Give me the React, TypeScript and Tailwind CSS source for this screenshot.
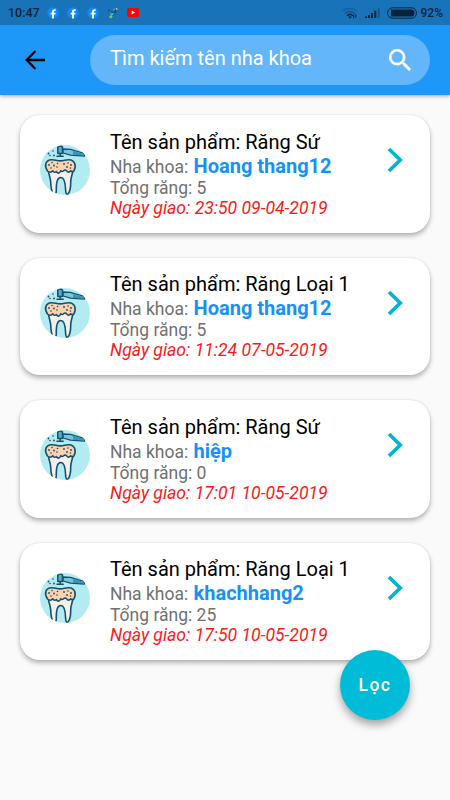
interface Order {
  id: number;
  product: string;
  clinic: string;
  total: number;
  deliveryDate: string;
}

const orders: Order[] = [
  { id: 1, product: "Răng Sứ", clinic: "Hoang thang12", total: 5, deliveryDate: "23:50 09-04-2019" },
  { id: 2, product: "Răng Loại 1", clinic: "Hoang thang12", total: 5, deliveryDate: "11:24 07-05-2019" },
  { id: 3, product: "Răng Sứ", clinic: "hiệp", total: 0, deliveryDate: "17:01 10-05-2019" },
  { id: 4, product: "Răng Loại 1", clinic: "khachhang2", total: 25, deliveryDate: "17:50 10-05-2019" },
];

function FacebookIcon() {
  return (
    <svg viewBox="0 0 12 12" className="h-3 w-3">
      <circle cx="6" cy="6" r="5.8" fill="#1088fa" />
      <path d="M5 11.6V7.6H3.6V5.8H5V4.7c0-1.6.9-2.5 2.4-2.5l1.3.1v1.6h-.8c-.7 0-.9.4-.9.9v1h1.6l-.3 1.8H7v4z" fill="#fff" />
    </svg>
  );
}

function BirdIcon() {
  return (
    <svg viewBox="0 0 12 12" className="h-3 w-3">
      <path d="M.8 1.6l3 3.2 3.2-.2 1.4-2.8 1.5.4-.7 3.1-2.5 3.1-2.5.6L2 6.2z" fill="#174f7c" />
      <path d="M1.8 4.2l2.7 2 3.1-.4L6 8.2l-2 .3zM6.1 2.3l1.2-1 .6 1.8-1.1.8z" fill="#38b3dc" />
      <path d="M8.6 1.3c1-.8 2.2.2 1.9 1.2l-1 .7z" fill="#f6c56b" />
      <path d="M2.2 9l2.6-.9.8 1.5-1.5 1.8-1.5-.6z" fill="#8cc63e" />
    </svg>
  );
}

function StatusBar() {
  return (
    <div className="flex h-[25px] items-center bg-[#1873b9] pl-2 pr-[7px] text-[#0c2337]">
      <span className="w-[39px] pt-px text-[12.5px] font-medium leading-none">10:47</span>
      <div className="flex items-center gap-2">
        <FacebookIcon />
        <FacebookIcon />
        <FacebookIcon />
        <BirdIcon />
        <svg viewBox="0 0 12 9" className="h-[9px] w-3">
          <rect width="12" height="9" rx="2" fill="#f00" />
          <path d="M4.7 2.5v4l3.5-2z" fill="#fff" />
        </svg>
      </div>
      <div className="ml-auto flex items-center">
        <svg viewBox="0 0 16 12" className="mr-[7px] h-3 w-4" fill="none" stroke="#0c2337">
          <path d="M.8 4.2C4.6.4 11.4.4 15.2 4.2" strokeWidth="1.2" opacity=".25" />
          <path d="M3 6.7C5.7 4 10.3 4 13 6.7" strokeWidth="1.2" opacity=".4" />
          <path d="M5 8.8c1.7-1.6 4.3-1.6 6 0" strokeWidth="1.5" />
          <path d="M6.2 9.6h3.6L8 11.7z" fill="#0c2337" stroke="none" />
          <path d="M11.7 7.6v3.8M13.8 7v3.6" strokeWidth="1" />
        </svg>
        <svg viewBox="0 0 15 10" className="mr-[7px] h-[10px] w-[15px]" fill="#0c2337">
          <path d="M0 8.5h2V10H0zM3 7h2v3H3zM6 5h2v5H6zM9.3 2.8h2V10h-2z" />
          <path d="M12.8.3h2V10h-2z" opacity=".35" />
        </svg>
        <svg viewBox="0 0 30 12" className="mr-1 h-3 w-[30px]">
          <rect x=".5" y=".8" width="29" height="10.4" rx="5.2" fill="none" stroke="#0c2337" />
          <path d="M4 2.5h20a3.5 3.5 0 0 1 0 7H4z" fill="#0c2337" />
        </svg>
        <span className="text-xs font-medium leading-none">92%</span>
      </div>
    </div>
  );
}

function ToothAvatar() {
  return (
    <svg viewBox="0 0 50 50" className="mt-[30px] h-[50px] w-[50px] shrink-0 overflow-hidden rounded-full">
      <rect width="50" height="50" fill="#b2ebf2" />
      <g stroke="#15516a" strokeWidth="1.6" strokeLinejoin="round" strokeLinecap="round">
        <path d="M8.3 25c.3 5 2.2 7 2.4 12 .1 5 .6 9.5 2.8 12 2.2 1 2.9-1 2.8-4-.2-7 .9-12.5 4.5-12.5s4.6 5 4.8 12.5c.1 3 .8 5 2.3 4 2.2-2.5 2.9-7 2.8-12 0-5 1.8-7 2.3-12z" fill="#f4efeb" />
        <path d="M7.5 26C4 21 5.3 15 11.5 14.7c3.5-.2 5 1.2 8.8 1.2s5.2-1.4 8.7-1.2c6 .3 7.6 6 4.9 11.3-1.3.8-2.3.7-3.2-.1-1.4 1.5-2.8 1.7-4 0-1-1.2-2-1.2-3.1-.1-1.1 1.1-2 .9-2.8-.1-1.3 3-3.4 3.2-4.4.8-1.3 1.3-2.9 1-3.6-.7-1.4 1.7-3.3 1.9-5.3.2z" fill="#fbd1ae" />
        <path d="M23 4l7.5.3 14 4.2v2.5l-14-.8L23 8z" fill="#78c3df" strokeWidth="1.3" />
        <path d="M17.8 2c1-1.3 3.7-1.3 4.7 0v6.5h-4.7zM20.2 8.7v2.6M17 11.3h6.2" fill="#58abcc" strokeWidth="1.5" />
      </g>
      <path d="M33 6l11 3v1.7l-11-.9z" fill="#3c94b5" />
      <g fill="#15516a">
        <circle cx="9" cy="20" r=".9" />
        <circle cx="12" cy="17.5" r=".8" />
        <circle cx="14" cy="20.5" r=".9" />
        <circle cx="11" cy="23" r=".8" />
        <circle cx="17.5" cy="18.5" r=".8" />
        <circle cx="17" cy="22" r=".8" />
        <circle cx="24" cy="19" r=".9" />
        <circle cx="27" cy="22" r=".9" />
        <circle cx="28" cy="18" r=".8" />
        <circle cx="31" cy="20" r=".9" />
        <circle cx="30.5" cy="23" r=".8" />
        <circle cx="8.5" cy="8.5" r=".9" />
        <circle cx="13" cy="6" r=".8" />
        <circle cx="10" cy="10.5" r=".8" />
        <circle cx="14" cy="10.5" r=".9" />
      </g>
    </svg>
  );
}

function OrderCard({ order }: { order: Order }) {
  return (
    <article className="flex h-[117.5px] rounded-[20px] bg-white px-5 shadow-[0_3px_5px_rgba(0,0,0,0.28),0_0_2px_rgba(0,0,0,0.12)]">
      <ToothAvatar />
      <div className="ml-5 flex-1 whitespace-nowrap pt-[14.5px]">
        <h2 className="text-[20px] leading-6 text-black">Tên sản phẩm: {order.product}</h2>
        <p className="text-[17.5px] leading-6 text-[#707070]">
          Nha khoa: <span className="ml-px text-[20px] font-bold text-[#1592f7]">{order.clinic}</span>
        </p>
        <p className="-mt-px text-[17.5px] leading-5 text-[#707070]">Tổng răng: {order.total}</p>
        <p className="text-[17.6px] italic leading-5 text-[#f81a1a]">Ngày giao: {order.deliveryDate}</p>
      </div>
      <svg viewBox="0 0 16 26" className="mr-[7px] mt-8 h-[26px] w-4 shrink-0">
        <path d="M2 2l11.2 11L2 24" fill="none" stroke="#00b5d3" strokeWidth="3.7" />
      </svg>
    </article>
  );
}

export default function App() {
  return (
    <div className="relative h-[800px] w-[450px] overflow-hidden bg-[#fafafa] font-[Roboto,sans-serif]">
      <header className="bg-[#1e98f8] shadow-[0_1px_4px_rgba(0,0,0,0.35)]">
        <StatusBar />
        <div className="flex h-[70px] items-center pl-[25px] pr-5">
          <svg viewBox="0 0 20 20" className="h-5 w-5">
            <path d="M20 10H2M10.5 1L1.7 10l8.8 9" fill="none" stroke="#000" strokeWidth="2.3" />
          </svg>
          <div className="ml-[45px] flex h-[50px] flex-1 items-center rounded-full bg-[#63b6f9] pl-5 pr-[19px]">
            <span className="flex-1 pb-1 text-[20px] leading-6 text-white">Tìm kiếm tên nha khoa</span>
            <svg viewBox="3 3 17.5 17.5" className="h-[22px] w-[22px]" fill="#fff" stroke="#fff" strokeWidth=".2">
              <path d="M15.5 14h-.79l-.28-.27A6.471 6.471 0 0 0 16 9.5 6.5 6.5 0 1 0 9.5 16c1.61 0 3.09-.59 4.23-1.57l.27.28v.79l5 4.99L20.49 19l-4.99-5zm-6 0C7.01 14 5 11.99 5 9.5S7.01 5 9.5 5 14 7.01 14 9.5 11.99 14 9.5 14z" />
            </svg>
          </div>
        </div>
      </header>

      <main className="grid gap-[25px] px-5 pt-5">
        {orders.map((order) => (
          <OrderCard key={order.id} order={order} />
        ))}
      </main>

      <button className="absolute bottom-20 right-10 h-[70px] w-[70px] rounded-full bg-[#00bcd6] text-[17.5px] font-medium tracking-[1.5px] text-white shadow-[0_5px_9px_rgba(0,0,0,0.35)]">
        Lọc
      </button>
    </div>
  );
}
